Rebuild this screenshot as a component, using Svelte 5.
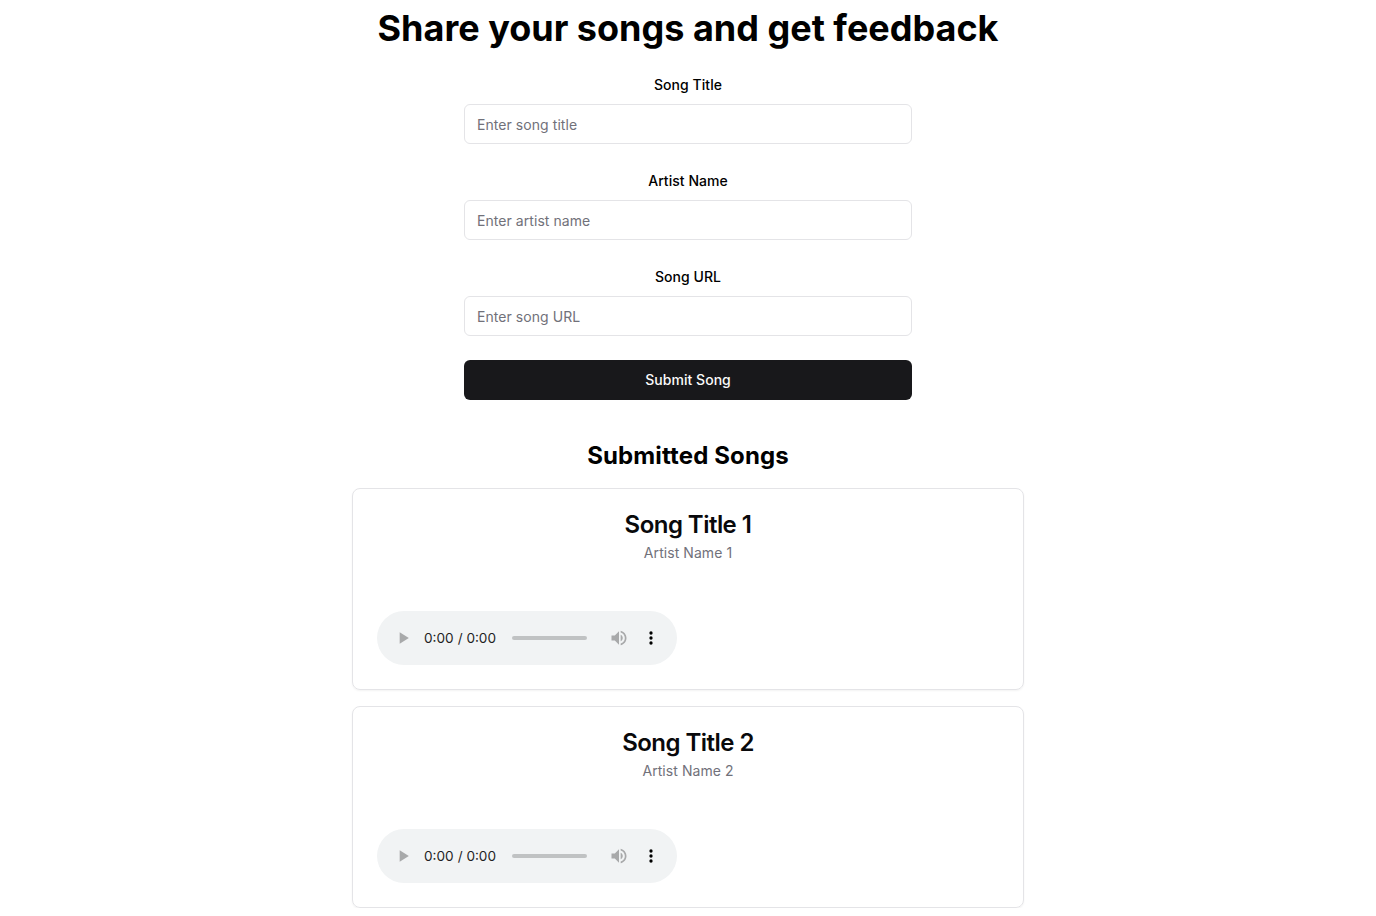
<script>
  const fields = [
    { id: 'title', label: 'Song Title', hint: 'Enter song title' },
    { id: 'artist', label: 'Artist Name', hint: 'Enter artist name' },
    { id: 'url', label: 'Song URL', hint: 'Enter song URL' }
  ];
  const songs = [
    { title: 'Song Title 1', artist: 'Artist Name 1' },
    { title: 'Song Title 2', artist: 'Artist Name 2' }
  ];
</script>

<main>
  <h1>Share your songs and get feedback</h1>
  <form onsubmit={(e) => e.preventDefault()}>
    {#each fields as f}
      <div class="field">
        <label for={f.id}>{f.label}</label>
        <input id={f.id} placeholder={f.hint} />
      </div>
    {/each}
    <button type="submit">Submit Song</button>
  </form>
  <h2>Submitted Songs</h2>
  <div class="songs">
    {#each songs as s}
      <article>
        <h3>{s.title}</h3>
        <p>{s.artist}</p>
        <audio controls></audio>
      </article>
    {/each}
  </div>
</main>

<style>
  :global(body) { background: #fff; overflow: hidden; }
  :global(*) { box-sizing: border-box; }
  main {
    width: 672px;
    margin: 0 auto;
    padding-top: 8px;
    font-family: Inter, sans-serif;
    text-align: center;
    color: #000;
  }
  h1, h2, h3, p { margin: 0; }
  h1 { font-size: 36px; line-height: 40px; font-weight: 700; white-space: nowrap; }
  form { width: 448px; margin: 24px auto 0; display: flex; flex-direction: column; gap: 24px; }
  .field { display: flex; flex-direction: column; gap: 8px; }
  .field label { padding-top: 2px; font-size: 14px; line-height: 22px; font-weight: 500; letter-spacing: 0.05px; }
  input {
    height: 40px;
    padding: 8px 12px;
    border: 1px solid #e4e4e7;
    border-radius: 6px;
    background: #fff;
    font: 400 14px/20px Inter, sans-serif;
    letter-spacing: 0.06px;
  }
  input::placeholder { color: #71717a; opacity: 1; }
  button {
    height: 40px;
    border: 0;
    border-radius: 6px;
    background: #18181b;
    color: #fafafa;
    font: 500 14px/20px Inter, sans-serif;
    letter-spacing: 0.04px;
  }
  h2 { margin-top: 40px; font-size: 24px; line-height: 32px; font-weight: 700; letter-spacing: 0.13px; }
  .songs { margin-top: 16px; display: flex; flex-direction: column; gap: 16px; }
  article {
    height: 202px;
    padding: 24px;
    border: 1px solid #e4e4e7;
    border-radius: 8px;
    box-shadow: 0 1px 2px rgb(0 0 0 / 0.05);
    color: #09090b;
  }
  h3 { font-size: 24px; line-height: 24px; font-weight: 600; letter-spacing: -0.54px; }
  p { margin-top: 6px; font-size: 14px; line-height: 20px; color: #71717a; letter-spacing: 0.06px; }
  audio { display: block; width: 300px; height: 54px; margin-top: 48px; }
  audio::-webkit-media-controls-current-time-display { font-family: Inter, sans-serif; font-size: 13.6px; padding-bottom: 1px; }
  audio::-webkit-media-controls-time-remaining-display { font-family: Inter, sans-serif; font-size: 13.6px; padding-bottom: 1px; }
</style>
